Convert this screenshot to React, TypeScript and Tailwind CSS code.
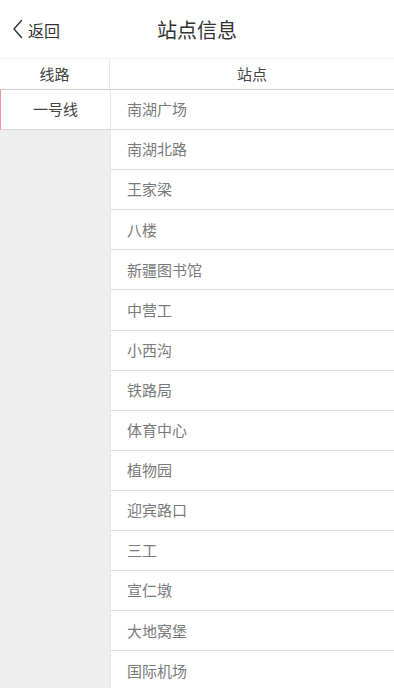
import React from 'react';

const stations = [
  '南湖广场',
  '南湖北路',
  '王家梁',
  '八楼',
  '新疆图书馆',
  '中营工',
  '小西沟',
  '铁路局',
  '体育中心',
  '植物园',
  '迎宾路口',
  '三工',
  '宣仁墩',
  '大地窝堡',
  '国际机场',
];

export default function App() {
  return (
    <div className="w-[394px] h-[688px] overflow-hidden bg-white flex flex-col font-['Noto_Sans_CJK_SC',sans-serif]">
      {/* top bar */}
      <div className="h-[58px] shrink-0 relative flex items-center justify-center bg-white">
        <button className="absolute left-[11px] top-[19px] flex items-center gap-[3px] text-[#333] text-[16px] leading-none">
          <svg width="14" height="20" viewBox="0 0 14 20" fill="none">
            <path d="M10.5 1.5 L3 10 L10.5 18.5" stroke="#333" strokeWidth="1.4" strokeLinecap="round" strokeLinejoin="round" />
          </svg>
          <span className="mt-[1px]">返回</span>
        </button>
        <h1 className="text-[20px] text-[#333] font-normal leading-none mt-[1px]">站点信息</h1>
      </div>

      {/* table header */}
      <div className="h-[32px] shrink-0 flex border-t border-[#f2f2f2] border-b border-b-[#cfcfcf] text-[15px] text-[#444]">
        <div className="w-[110px] flex items-center justify-center border-r border-[#e6e6e6]">线路</div>
        <div className="flex-1 flex items-center justify-center">站点</div>
      </div>

      {/* body */}
      <div className="flex-1 flex min-h-0">
        <div className="w-[111px] shrink-0 bg-[#eeeeee] border-r border-[#e6e6e6]">
          <div className="h-[40px] bg-white border-l border-[#f59a9a] border-b border-b-[#d6d6d6] flex items-center justify-center text-[15px] text-[#444]">
            一号线
          </div>
        </div>
        <div className="flex-1 flex flex-col">
          {stations.map((s) => (
            <div
              key={s}
              className="h-[40.1px] shrink-0 flex items-center pl-[16px] border-b border-[#dcdcdc] text-[15px] text-[#7a7a7a]"
            >
              {s}
            </div>
          ))}
        </div>
      </div>
    </div>
  );
}
